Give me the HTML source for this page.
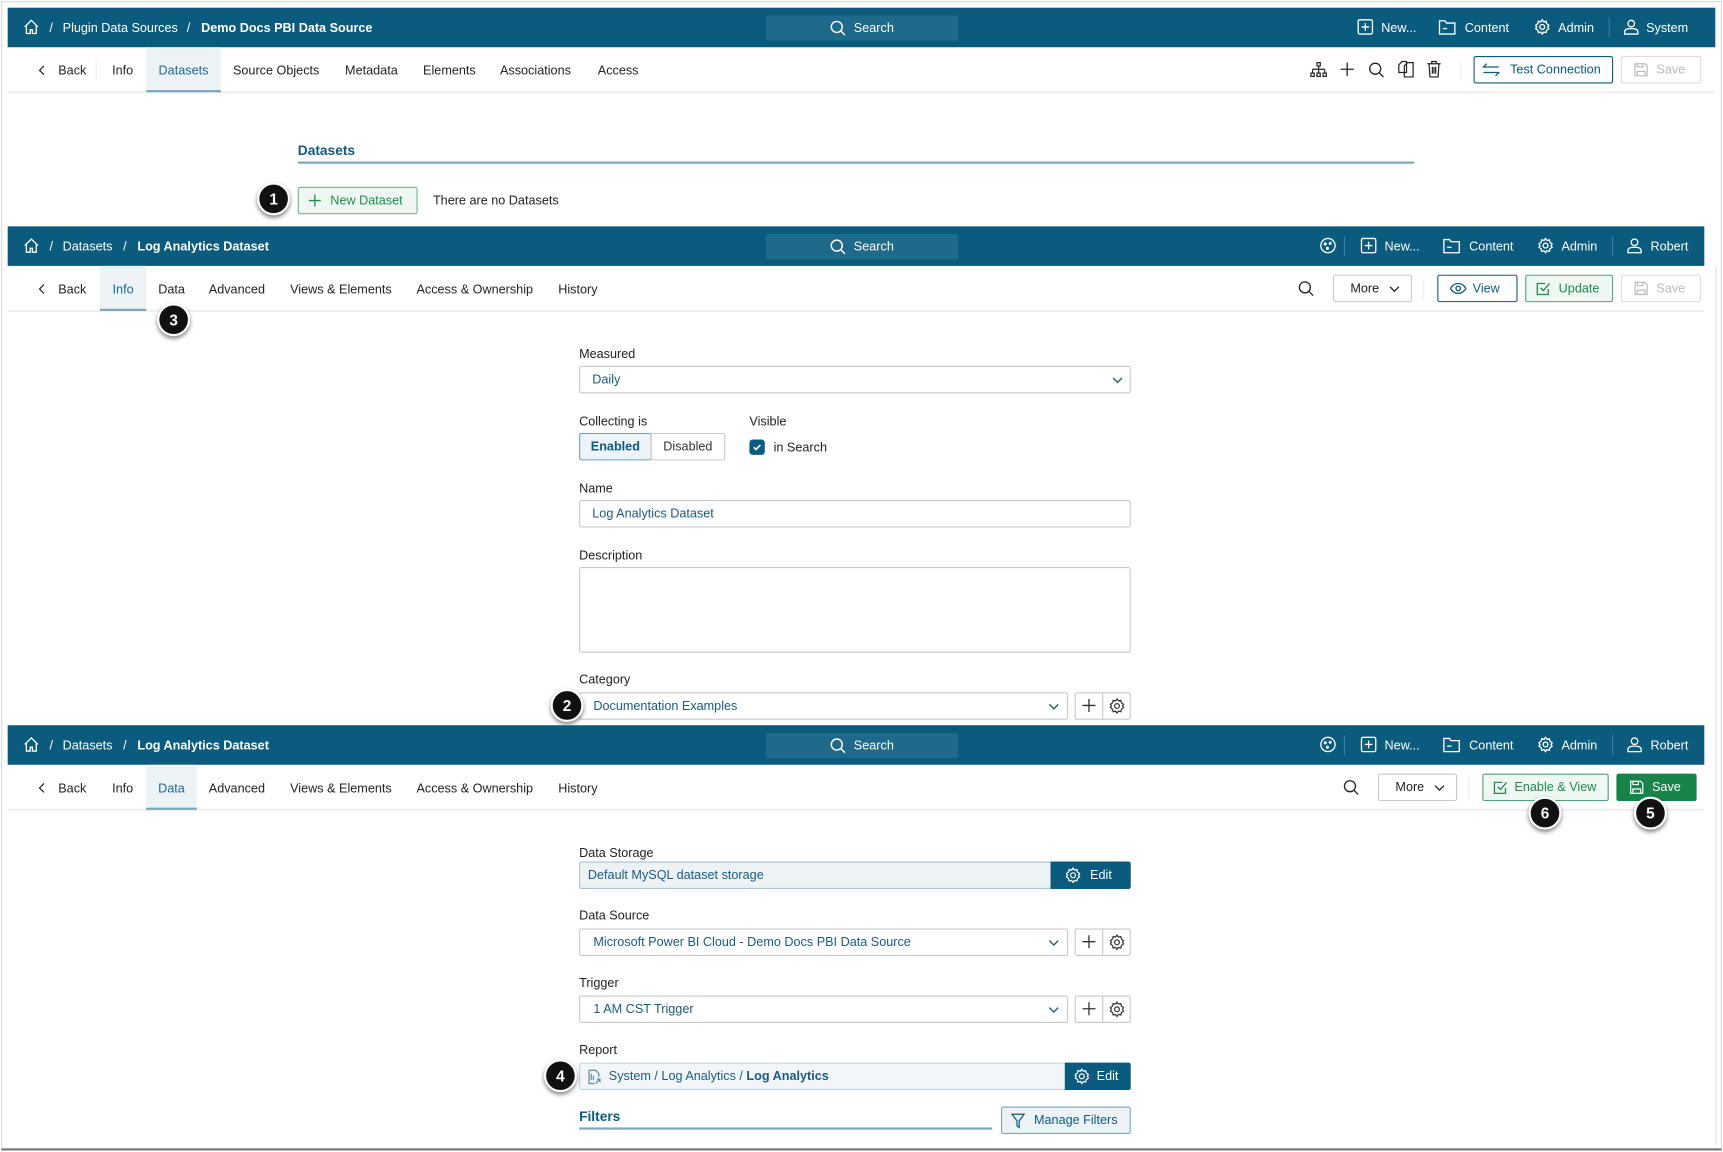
<!DOCTYPE html>
<html><head><meta charset="utf-8">
<style>
*{box-sizing:border-box;margin:0;padding:0}
html,body{width:1723px;height:1151px;overflow:hidden;background:#fff}
#s{position:absolute;left:0;top:0;width:1568px;height:1048px;transform:scale(1.09885);transform-origin:0 0;font-family:"Liberation Sans",sans-serif;font-size:11.5px;color:#222;background:#fff}
.a{position:absolute}
.bar{position:absolute;left:7px;height:36px;background:#0a5b7e;color:#fff;font-size:11.5px}
.bar .t{position:absolute;top:13px;white-space:nowrap}
.srch{position:absolute;left:690px;top:7px;width:175px;height:23px;background:#1f6a8b;border-radius:2px}
.tabs{position:absolute;left:7px;height:42px;border-bottom:2px solid #f0f0f0}
.tab{position:absolute;top:0;height:41px;line-height:45px;white-space:nowrap}
.act{background:#edf2f5;color:#1b6896;border-bottom:2px solid #79a6bb;text-align:center}
.lbl{position:absolute;left:527px;font-size:11.5px;color:#222;margin-top:2px}
.inp{position:absolute;left:527px;height:25px;border:1px solid #c9c9c9;border-radius:2px;background:#fff;color:#1a5b82;line-height:25px;padding-left:11px;white-space:nowrap}
.btn{position:absolute;height:25px;border:1px solid #c9c9c9;border-radius:2px;line-height:25px;text-align:center;white-space:nowrap}
.badge{position:absolute;width:30px;height:30px;border-radius:50%;background:#111;border:2px solid #fff;box-shadow:0 2px 4px rgba(0,0,0,.5);color:#fff;font-weight:bold;font-size:14px;text-align:center;line-height:26px}
svg{position:absolute}
.edit{position:absolute;background:#0a5b7e;color:#fff;height:25px;line-height:27px;border-radius:0 2px 2px 0}
</style></head><body><div id="s">
<div class="a" style="left:1px;top:1px;width:1566px;height:1046px;border:1px solid #d8d8d8;border-bottom:2px solid #777"></div>
<div class="a" style="left:1561px;top:242px;width:1px;height:800px;background:#e4e4e4"></div>

<!-- BAR 1 -->
<div class="bar" style="top:7px;width:1554px">
<svg style="left:14px;top:10px" width="15" height="15" viewBox="0 0 15 15" fill="none" stroke="#fff" stroke-width="1.2"><path d="M1.5 7.5L7.5 1.5 13.5 7.5M3 6v7.5h3.5V10h2v3.5H12V6"/></svg>
<span class="t" style="left:38px">/</span><span class="t" style="left:50px">Plugin Data Sources</span><span class="t" style="left:163px">/</span><span class="t" style="left:176px;font-weight:bold">Demo Docs PBI Data Source</span>
<div class="srch"><svg style="left:58px;top:4px" width="15" height="15" viewBox="0 0 15 15" fill="none" stroke="#fff" stroke-width="1.3"><circle cx="6.5" cy="6.5" r="5"/><path d="M10 10l4 4"/></svg><span class="a" style="left:80px;top:6px">Search</span></div>
<svg style="left:1228px;top:10px" width="15" height="15" viewBox="0 0 15 15" fill="none" stroke="#fff" stroke-width="1.2"><rect x="1" y="1" width="13" height="13" rx="1.5"/><path d="M7.5 4v7M4 7.5h7"/></svg><span class="t" style="left:1250px">New...</span>
<svg style="left:1302px;top:10px" width="16" height="15" viewBox="0 0 16 15" fill="none" stroke="#fff" stroke-width="1.2"><path d="M1 2h5l1.5 2H15v10H1z"/><path d="M4 9h4"/></svg><span class="t" style="left:1326px">Content</span>
<svg style="left:1389px;top:10px" width="15" height="15" viewBox="0 0 15 15" fill="none" stroke="#fff" stroke-width="1.2"><circle cx="7.5" cy="7.5" r="2.2"/><path d="M7.5 1l1.3 1.8 2.2-.5.5 2.2L13.5 6 12.5 7.5l1 1.5-2 1.5-.5 2.2-2.2-.5L7.5 14l-1.3-1.8-2.2.5-.5-2.2L1.5 9l1-1.5-1-1.5 2-1.5.5-2.2 2.2.5z"/></svg><span class="t" style="left:1411px">Admin</span>
<div class="a" style="left:1457px;top:9px;width:1px;height:18px;background:#3d7d9a"></div>
<svg style="left:1470px;top:10px" width="15" height="15" viewBox="0 0 15 15" fill="none" stroke="#fff" stroke-width="1.2"><circle cx="7.5" cy="4.5" r="3"/><path d="M1.5 14v-2c0-2 2-3 6-3s6 1 6 3v2z"/></svg><span class="t" style="left:1491px">System</span>
</div>
<!-- TABS 1 -->
<div class="tabs" style="top:43px;width:1554px">
<svg style="left:28px;top:16px" width="6" height="10" viewBox="0 0 6 10" fill="none" stroke="#222" stroke-width="1.1"><path d="M5 1L1 5l4 4"/></svg><span class="tab" style="left:46px">Back</span>
<div class="a" style="left:80px;top:12px;width:1px;height:18px;background:#eee"></div>
<span class="tab" style="left:95px">Info</span>
<span class="tab act" style="left:126px;width:68px">Datasets</span>
<span class="tab" style="left:205px">Source Objects</span><span class="tab" style="left:307px">Metadata</span><span class="tab" style="left:378px">Elements</span><span class="tab" style="left:448px">Associations</span><span class="tab" style="left:537px">Access</span>
<svg style="left:1185px;top:13px" width="16" height="16" viewBox="0 0 16 16" fill="none" stroke="#222" stroke-width="1.1"><rect x="6.5" y="1" width="3" height="3"/><path d="M8 4v3M2.5 7h11M2.5 7v3M8 7v3M13.5 7v3"/><rect x="1" y="10.5" width="3" height="3"/><rect x="6.5" y="10.5" width="3" height="3"/><rect x="12" y="10.5" width="3" height="3"/></svg>
<svg style="left:1212px;top:13px" width="14" height="14" viewBox="0 0 14 14" stroke="#222" stroke-width="1.2"><path d="M7 1v12M1 7h12"/></svg>
<svg style="left:1238px;top:13px" width="15" height="15" viewBox="0 0 15 15" fill="none" stroke="#222" stroke-width="1.2"><circle cx="6.5" cy="6.5" r="5"/><path d="M10 10l4 4"/></svg>
<svg style="left:1265px;top:12px" width="15" height="16" viewBox="0 0 15 16" fill="none" stroke="#222" stroke-width="1.1"><path d="M1 4l3-3h4v10H1zM6 5l3-3h5v13H6z"/></svg>
<svg style="left:1291px;top:12px" width="14" height="16" viewBox="0 0 14 16" fill="none" stroke="#222" stroke-width="1.1"><path d="M1 3h12M5 3V1h4v2M2.5 3l.8 12h7.4l.8-12M5.5 6v6M7 6v6M8.5 6v6"/></svg>
<div class="a" style="left:1322px;top:12px;width:1px;height:18px;background:#eee"></div>
<div class="btn" style="left:1334px;top:8px;width:127px;border-color:#0a5b7e;color:#0a5b7e;padding-left:22px">Test Connection
<svg style="left:7px;top:5px" width="16" height="13" viewBox="0 0 16 13" fill="none" stroke="#0a5b7e" stroke-width="1.1"><path d="M15 4H1l3-3M1 9h14l-3 3"/></svg></div>
<div class="btn" style="left:1468px;top:8px;width:73px;color:#bbb;border-color:#ddd;padding-left:18px">Save
<svg style="left:11px;top:5px" width="13" height="13" viewBox="0 0 13 13" fill="none" stroke="#bbb" stroke-width="1.1"><path d="M1 1h9l2 2v9H1zM3 1v3h5V1M3 12V8h7v4"/></svg></div>
</div>
<div class="a" style="left:271px;top:130px;color:#0b5c80;font-weight:bold;font-size:12.5px">Datasets</div>
<div class="a" style="left:271px;top:147px;width:1016px;height:2px;background:#7aa7bd"></div>
<div class="btn" style="left:271px;top:170px;width:109px;border-color:#6fb690;background:#eef7f2;color:#1e8a4f;padding-left:16px">New Dataset<svg style="left:9px;top:6px" width="11" height="11" viewBox="0 0 11 11" stroke="#1e8a4f" stroke-width="1.2"><path d="M5.5 0v11M0 5.5h11"/></svg></div>
<div class="a" style="left:394px;top:177px">There are no Datasets</div>
<div class="badge" style="left:234px;top:166px">1</div>

<!-- BAR 2 -->
<div class="bar" style="top:206px;width:1544px">
<svg style="left:14px;top:10px" width="15" height="15" viewBox="0 0 15 15" fill="none" stroke="#fff" stroke-width="1.2"><path d="M1.5 7.5L7.5 1.5 13.5 7.5M3 6v7.5h3.5V10h2v3.5H12V6"/></svg>
<span class="t" style="left:38px">/</span><span class="t" style="left:50px">Datasets</span><span class="t" style="left:105px">/</span><span class="t" style="left:118px;font-weight:bold">Log Analytics Dataset</span>
<div class="srch"><svg style="left:58px;top:4px" width="15" height="15" viewBox="0 0 15 15" fill="none" stroke="#fff" stroke-width="1.3"><circle cx="6.5" cy="6.5" r="5"/><path d="M10 10l4 4"/></svg><span class="a" style="left:80px;top:6px">Search</span></div>
<svg style="left:1194px;top:10px" width="15" height="15" viewBox="0 0 15 15" fill="none" stroke="#fff" stroke-width="1.2"><circle cx="7.5" cy="7.5" r="6.5"/><circle cx="5" cy="6" r=".8"/><circle cx="9.5" cy="5.5" r=".8"/><circle cx="7" cy="10" r=".8"/></svg>
<div class="a" style="left:1216px;top:9px;width:1px;height:18px;background:#3d7d9a"></div>
<svg style="left:1231px;top:10px" width="15" height="15" viewBox="0 0 15 15" fill="none" stroke="#fff" stroke-width="1.2"><rect x="1" y="1" width="13" height="13" rx="1.5"/><path d="M7.5 4v7M4 7.5h7"/></svg><span class="t" style="left:1253px">New...</span>
<svg style="left:1306px;top:10px" width="16" height="15" viewBox="0 0 16 15" fill="none" stroke="#fff" stroke-width="1.2"><path d="M1 2h5l1.5 2H15v10H1z"/><path d="M4 9h4"/></svg><span class="t" style="left:1330px">Content</span>
<svg style="left:1392px;top:10px" width="15" height="15" viewBox="0 0 15 15" fill="none" stroke="#fff" stroke-width="1.2"><circle cx="7.5" cy="7.5" r="2.2"/><path d="M7.5 1l1.3 1.8 2.2-.5.5 2.2L13.5 6 12.5 7.5l1 1.5-2 1.5-.5 2.2-2.2-.5L7.5 14l-1.3-1.8-2.2.5-.5-2.2L1.5 9l1-1.5-1-1.5 2-1.5.5-2.2 2.2.5z"/></svg><span class="t" style="left:1414px">Admin</span>
<div class="a" style="left:1460px;top:9px;width:1px;height:18px;background:#3d7d9a"></div>
<svg style="left:1473px;top:10px" width="15" height="15" viewBox="0 0 15 15" fill="none" stroke="#fff" stroke-width="1.2"><circle cx="7.5" cy="4.5" r="3"/><path d="M1.5 14v-2c0-2 2-3 6-3s6 1 6 3v2z"/></svg><span class="t" style="left:1495px">Robert</span>
</div>
<!-- TABS 2 -->
<div class="tabs" style="top:242px;width:1544px">
<svg style="left:28px;top:16px" width="6" height="10" viewBox="0 0 6 10" fill="none" stroke="#222" stroke-width="1.1"><path d="M5 1L1 5l4 4"/></svg><span class="tab" style="left:46px">Back</span>
<span class="tab act" style="left:84px;width:42px">Info</span>
<span class="tab" style="left:137px">Data</span><span class="tab" style="left:183px">Advanced</span><span class="tab" style="left:257px">Views &amp; Elements</span><span class="tab" style="left:372px">Access &amp; Ownership</span><span class="tab" style="left:501px">History</span>
<svg style="left:1174px;top:13px" width="15" height="15" viewBox="0 0 15 15" fill="none" stroke="#222" stroke-width="1.2"><circle cx="6.5" cy="6.5" r="5"/><path d="M10 10l4 4"/></svg>
<div class="btn" style="left:1206px;top:8px;width:72px;padding-right:14px">More<svg style="left:50px;top:9px" width="10" height="6" viewBox="0 0 10 6" fill="none" stroke="#222" stroke-width="1.2"><path d="M1 1l4 4 4-4"/></svg></div>
<div class="a" style="left:1288px;top:12px;width:1px;height:18px;background:#eee"></div>
<div class="btn" style="left:1301px;top:8px;width:73px;border-color:#0a5b7e;color:#0a5b7e;padding-left:16px">View<svg style="left:10px;top:6px" width="16" height="11" viewBox="0 0 16 11" fill="none" stroke="#0a5b7e" stroke-width="1.2"><path d="M1 5.5C3 2 5.5 1 8 1s5 1 7 4.5C13 9 10.5 10 8 10S3 9 1 5.5z"/><circle cx="8" cy="5.5" r="2"/></svg></div>
<div class="btn" style="left:1381px;top:8px;width:80px;border-color:#4fa276;background:#eef7f2;color:#1e8a4f;padding-left:18px">Update<svg style="left:9px;top:5px" width="13" height="13" viewBox="0 0 13 13" fill="none" stroke="#1e8a4f" stroke-width="1.2"><path d="M11 7v5H1V2h7M4 6l2.5 2.5L12 2"/></svg></div>
<div class="btn" style="left:1468px;top:8px;width:73px;color:#bbb;border-color:#ddd;padding-left:18px">Save<svg style="left:11px;top:5px" width="13" height="13" viewBox="0 0 13 13" fill="none" stroke="#bbb" stroke-width="1.1"><path d="M1 1h9l2 2v9H1zM3 1v3h5V1M3 12V8h7v4"/></svg></div>
</div>
<div class="badge" style="left:143px;top:276px">3</div>

<!-- FORM 1 -->
<div class="lbl" style="top:315px">Measured</div>
<div class="inp" style="top:333px;width:502px">Daily<svg style="left:484px;top:9px" width="10" height="6" viewBox="0 0 10 6" fill="none" stroke="#1a5b82" stroke-width="1.2"><path d="M1 1l4 4 4-4"/></svg></div>
<div class="lbl" style="top:376px">Collecting is</div>
<div class="lbl" style="top:376px;left:682px">Visible</div>
<div class="btn" style="left:527px;top:394px;width:66px;border-color:#6e9fb8;background:#edf3f7;color:#0b5c80;font-weight:bold">Enabled</div>
<div class="btn" style="left:592px;top:394px;width:68px;color:#333">Disabled</div>
<div class="a" style="left:682px;top:400px;width:14px;height:14px;border-radius:3px;background:#0b5c80"><svg style="left:3px;top:3px" width="8" height="8" viewBox="0 0 8 8" fill="none" stroke="#fff" stroke-width="1.5"><path d="M1 4l2 2 4-4"/></svg></div>
<div class="lbl" style="left:704px;top:400px">in Search</div>
<div class="lbl" style="top:437px">Name</div>
<div class="inp" style="top:455px;width:502px">Log Analytics Dataset</div>
<div class="lbl" style="top:498px">Description</div>
<div class="inp" style="top:516px;width:502px;height:78px"></div>
<div class="lbl" style="top:611px">Category</div>
<div class="inp" style="top:630px;width:445px;padding-left:12px">Documentation Examples<svg style="left:426px;top:9px" width="10" height="6" viewBox="0 0 10 6" fill="none" stroke="#1a5b82" stroke-width="1.2"><path d="M1 1l4 4 4-4"/></svg></div>
<div class="btn" style="left:978px;top:630px;width:51px"></div><div class="a" style="left:1003px;top:630px;width:1px;height:25px;background:#c9c9c9"></div>
<svg style="left:985px;top:636px" width="12" height="12" viewBox="0 0 12 12" stroke="#333" stroke-width="1.2"><path d="M6 0v12M0 6h12"/></svg>
<svg style="left:1009px;top:635px" width="15" height="15" viewBox="0 0 15 15" fill="none" stroke="#333" stroke-width="1.1"><circle cx="7.5" cy="7.5" r="2.2"/><path d="M7.5 1l1.3 1.8 2.2-.5.5 2.2L13.5 6 12.5 7.5l1 1.5-2 1.5-.5 2.2-2.2-.5L7.5 14l-1.3-1.8-2.2.5-.5-2.2L1.5 9l1-1.5-1-1.5 2-1.5.5-2.2 2.2.5z"/></svg>
<div class="badge" style="left:501px;top:627px">2</div>

<!-- BAR 3 -->
<div class="bar" style="top:660px;width:1544px">
<svg style="left:14px;top:10px" width="15" height="15" viewBox="0 0 15 15" fill="none" stroke="#fff" stroke-width="1.2"><path d="M1.5 7.5L7.5 1.5 13.5 7.5M3 6v7.5h3.5V10h2v3.5H12V6"/></svg>
<span class="t" style="left:38px">/</span><span class="t" style="left:50px">Datasets</span><span class="t" style="left:105px">/</span><span class="t" style="left:118px;font-weight:bold">Log Analytics Dataset</span>
<div class="srch"><svg style="left:58px;top:4px" width="15" height="15" viewBox="0 0 15 15" fill="none" stroke="#fff" stroke-width="1.3"><circle cx="6.5" cy="6.5" r="5"/><path d="M10 10l4 4"/></svg><span class="a" style="left:80px;top:6px">Search</span></div>
<svg style="left:1194px;top:10px" width="15" height="15" viewBox="0 0 15 15" fill="none" stroke="#fff" stroke-width="1.2"><circle cx="7.5" cy="7.5" r="6.5"/><circle cx="5" cy="6" r=".8"/><circle cx="9.5" cy="5.5" r=".8"/><circle cx="7" cy="10" r=".8"/></svg>
<div class="a" style="left:1216px;top:9px;width:1px;height:18px;background:#3d7d9a"></div>
<svg style="left:1231px;top:10px" width="15" height="15" viewBox="0 0 15 15" fill="none" stroke="#fff" stroke-width="1.2"><rect x="1" y="1" width="13" height="13" rx="1.5"/><path d="M7.5 4v7M4 7.5h7"/></svg><span class="t" style="left:1253px">New...</span>
<svg style="left:1306px;top:10px" width="16" height="15" viewBox="0 0 16 15" fill="none" stroke="#fff" stroke-width="1.2"><path d="M1 2h5l1.5 2H15v10H1z"/><path d="M4 9h4"/></svg><span class="t" style="left:1330px">Content</span>
<svg style="left:1392px;top:10px" width="15" height="15" viewBox="0 0 15 15" fill="none" stroke="#fff" stroke-width="1.2"><circle cx="7.5" cy="7.5" r="2.2"/><path d="M7.5 1l1.3 1.8 2.2-.5.5 2.2L13.5 6 12.5 7.5l1 1.5-2 1.5-.5 2.2-2.2-.5L7.5 14l-1.3-1.8-2.2.5-.5-2.2L1.5 9l1-1.5-1-1.5 2-1.5.5-2.2 2.2.5z"/></svg><span class="t" style="left:1414px">Admin</span>
<div class="a" style="left:1460px;top:9px;width:1px;height:18px;background:#3d7d9a"></div>
<svg style="left:1473px;top:10px" width="15" height="15" viewBox="0 0 15 15" fill="none" stroke="#fff" stroke-width="1.2"><circle cx="7.5" cy="4.5" r="3"/><path d="M1.5 14v-2c0-2 2-3 6-3s6 1 6 3v2z"/></svg><span class="t" style="left:1495px">Robert</span>
</div>
<!-- TABS 3 -->
<div class="tabs" style="top:696px;width:1544px">
<svg style="left:28px;top:16px" width="6" height="10" viewBox="0 0 6 10" fill="none" stroke="#222" stroke-width="1.1"><path d="M5 1L1 5l4 4"/></svg><span class="tab" style="left:46px">Back</span>
<span class="tab" style="left:95px">Info</span>
<span class="tab act" style="left:126px;width:46px">Data</span><span class="tab" style="left:183px">Advanced</span><span class="tab" style="left:257px">Views &amp; Elements</span><span class="tab" style="left:372px">Access &amp; Ownership</span><span class="tab" style="left:501px">History</span>
<svg style="left:1215px;top:13px" width="15" height="15" viewBox="0 0 15 15" fill="none" stroke="#222" stroke-width="1.2"><circle cx="6.5" cy="6.5" r="5"/><path d="M10 10l4 4"/></svg>
<div class="btn" style="left:1247px;top:8px;width:72px;padding-right:14px">More<svg style="left:50px;top:9px" width="10" height="6" viewBox="0 0 10 6" fill="none" stroke="#222" stroke-width="1.2"><path d="M1 1l4 4 4-4"/></svg></div>
<div class="a" style="left:1329px;top:12px;width:1px;height:18px;background:#eee"></div>
<div class="btn" style="left:1342px;top:8px;width:115px;border-color:#4fa276;background:#eef7f2;color:#1e8a4f;padding-left:18px">Enable &amp; View<svg style="left:9px;top:5px" width="13" height="13" viewBox="0 0 13 13" fill="none" stroke="#1e8a4f" stroke-width="1.2"><path d="M11 7v5H1V2h7M4 6l2.5 2.5L12 2"/></svg></div>
<div class="btn" style="left:1464px;top:8px;width:73px;border-color:#178449;background:#178449;color:#fff;padding-left:18px">Save<svg style="left:11px;top:5px" width="13" height="13" viewBox="0 0 13 13" fill="none" stroke="#fff" stroke-width="1.1"><path d="M1 1h9l2 2v9H1zM3 1v3h5V1M3 12V8h7v4"/></svg></div>
</div>
<div class="badge" style="left:1391px;top:725px">6</div>
<div class="badge" style="left:1487px;top:725px">5</div>

<!-- FORM 2 -->
<div class="lbl" style="top:769px">Data Storage</div>
<div class="inp" style="top:784px;width:502px;background:#edf2f5;border-color:#a8c3d1;padding-left:7px">Default MySQL dataset storage</div>
<div class="edit" style="left:956px;top:784px;width:73px;padding-left:36px">Edit<svg style="left:13px;top:5px" width="15" height="15" viewBox="0 0 15 15" fill="none" stroke="#fff" stroke-width="1.1"><circle cx="7.5" cy="7.5" r="2.2"/><path d="M7.5 1l1.3 1.8 2.2-.5.5 2.2L13.5 6 12.5 7.5l1 1.5-2 1.5-.5 2.2-2.2-.5L7.5 14l-1.3-1.8-2.2.5-.5-2.2L1.5 9l1-1.5-1-1.5 2-1.5.5-2.2 2.2.5z"/></svg></div>

<div class="lbl" style="top:826px">Data Source</div>
<div class="inp" style="top:845px;width:445px;padding-left:12px">Microsoft Power BI Cloud - Demo Docs PBI Data Source<svg style="left:426px;top:9px" width="10" height="6" viewBox="0 0 10 6" fill="none" stroke="#1a5b82" stroke-width="1.2"><path d="M1 1l4 4 4-4"/></svg></div>
<div class="btn" style="left:978px;top:845px;width:51px"></div><div class="a" style="left:1003px;top:845px;width:1px;height:25px;background:#c9c9c9"></div>
<svg style="left:985px;top:851px" width="12" height="12" viewBox="0 0 12 12" stroke="#333" stroke-width="1.2"><path d="M6 0v12M0 6h12"/></svg>
<svg style="left:1009px;top:850px" width="15" height="15" viewBox="0 0 15 15" fill="none" stroke="#333" stroke-width="1.1"><circle cx="7.5" cy="7.5" r="2.2"/><path d="M7.5 1l1.3 1.8 2.2-.5.5 2.2L13.5 6 12.5 7.5l1 1.5-2 1.5-.5 2.2-2.2-.5L7.5 14l-1.3-1.8-2.2.5-.5-2.2L1.5 9l1-1.5-1-1.5 2-1.5.5-2.2 2.2.5z"/></svg>

<div class="lbl" style="top:887px">Trigger</div>
<div class="inp" style="top:906px;width:445px;padding-left:12px">1 AM CST Trigger<svg style="left:426px;top:9px" width="10" height="6" viewBox="0 0 10 6" fill="none" stroke="#1a5b82" stroke-width="1.2"><path d="M1 1l4 4 4-4"/></svg></div>
<div class="btn" style="left:978px;top:906px;width:51px"></div><div class="a" style="left:1003px;top:906px;width:1px;height:25px;background:#c9c9c9"></div>
<svg style="left:985px;top:912px" width="12" height="12" viewBox="0 0 12 12" stroke="#333" stroke-width="1.2"><path d="M6 0v12M0 6h12"/></svg>
<svg style="left:1009px;top:911px" width="15" height="15" viewBox="0 0 15 15" fill="none" stroke="#333" stroke-width="1.1"><circle cx="7.5" cy="7.5" r="2.2"/><path d="M7.5 1l1.3 1.8 2.2-.5.5 2.2L13.5 6 12.5 7.5l1 1.5-2 1.5-.5 2.2-2.2-.5L7.5 14l-1.3-1.8-2.2.5-.5-2.2L1.5 9l1-1.5-1-1.5 2-1.5.5-2.2 2.2.5z"/></svg>

<div class="lbl" style="top:948px">Report</div>
<div class="inp" style="top:967px;width:502px;background:#f3f6f8;border-color:#c5d4dc;padding-left:26px">System / Log Analytics / <b>Log Analytics</b>
<svg style="left:6px;top:5px" width="14" height="14" viewBox="0 0 14 14" fill="none" stroke="#5a8aa5" stroke-width="1.1"><path d="M2 1h6l3 3v3M2 1v12h5M4 4v6M6 6v4M8 13l4-4M9 9h3v3"/></svg></div>
<div class="edit" style="left:969px;top:967px;width:60px;padding-left:29px">Edit<svg style="left:8px;top:5px" width="15" height="15" viewBox="0 0 15 15" fill="none" stroke="#fff" stroke-width="1.1"><circle cx="7.5" cy="7.5" r="2.2"/><path d="M7.5 1l1.3 1.8 2.2-.5.5 2.2L13.5 6 12.5 7.5l1 1.5-2 1.5-.5 2.2-2.2-.5L7.5 14l-1.3-1.8-2.2.5-.5-2.2L1.5 9l1-1.5-1-1.5 2-1.5.5-2.2 2.2.5z"/></svg></div>
<div class="badge" style="left:495px;top:964px">4</div>

<div class="a" style="left:527px;top:1009px;color:#0b5c80;font-weight:bold;font-size:12.5px">Filters</div>
<div class="a" style="left:527px;top:1026px;width:376px;height:2px;background:#7aa7bd"></div>
<div class="btn" style="left:911px;top:1007px;width:118px;border-color:#7aa7bd;background:#edf2f5;color:#0b5c80;padding-left:18px">Manage Filters<svg style="left:8px;top:5px" width="13" height="14" viewBox="0 0 13 14" fill="none" stroke="#0b5c80" stroke-width="1.1"><path d="M1 1h11L7.5 7v6l-2-1.5V7z"/></svg></div>
</div></body></html>
